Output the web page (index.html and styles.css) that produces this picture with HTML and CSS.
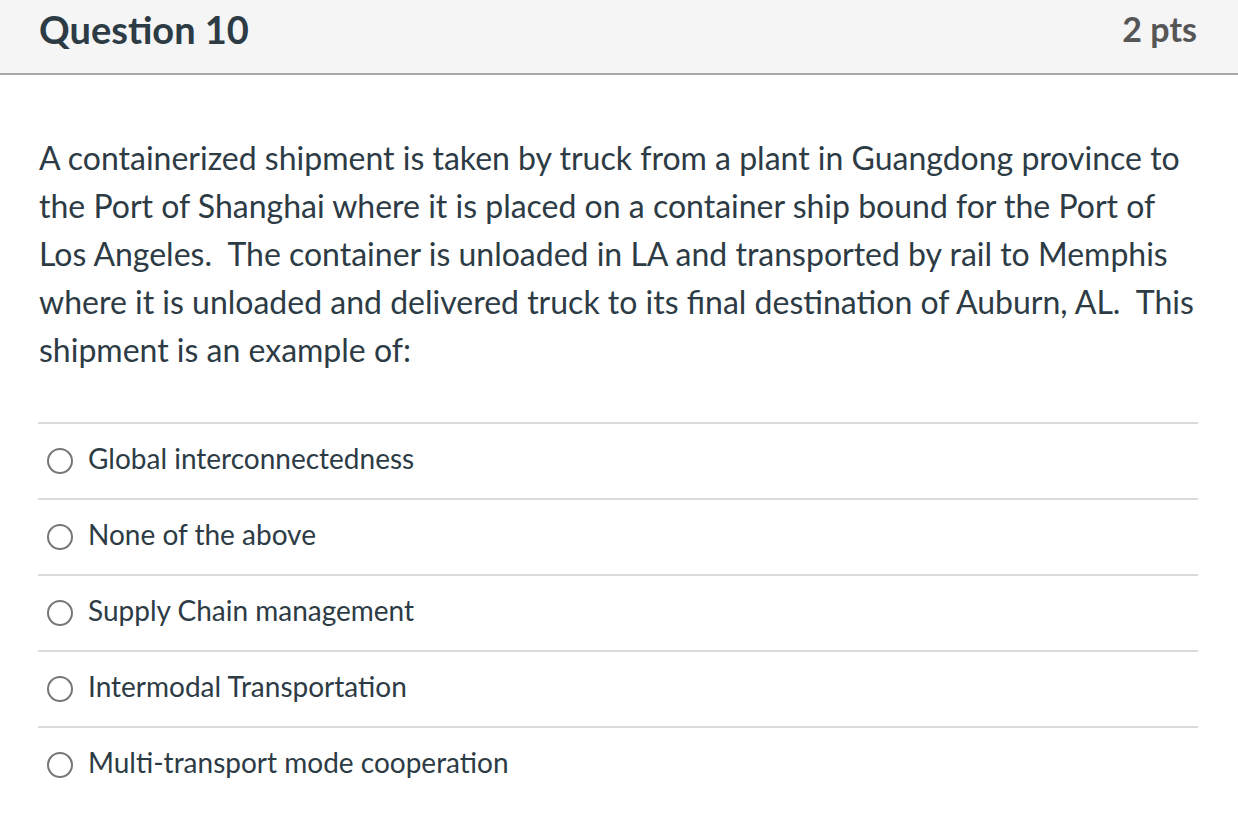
FILE: index.html
```html
<!DOCTYPE html>
<html lang="en">
<head>
    <meta charset="UTF-8">
    <meta name="viewport" content="width=device-width, initial-scale=1.0">
    <title>Question 10</title>
    <link rel="stylesheet" href="styles.css">
</head>
<body>
<div class="question">
    <div class="header">
        <span class="name">Question 10</span>
        <span class="pts">2 pts</span>
    </div>

    <div class="text">
        A containerized shipment is taken by truck from a plant in Guangdong province to
        the Port of Shanghai where it is placed on a container ship bound for the Port of
        Los Angeles.&nbsp; The container is unloaded in LA and transported by rail to Memphis
        where it is unloaded and delivered truck to its final destination of Auburn, AL.&nbsp; This
        shipment is an example of:
    </div>

    <div class="answers">
        <label class="answer">
            <span class="radio"></span>
            <span>Global interconnectedness</span>
        </label>
        <label class="answer">
            <span class="radio"></span>
            <span>None of the above</span>
        </label>
        <label class="answer">
            <span class="radio"></span>
            <span>Supply Chain management</span>
        </label>
        <label class="answer">
            <span class="radio"></span>
            <span>Intermodal Transportation</span>
        </label>
        <label class="answer">
            <span class="radio"></span>
            <span>Multi-transport mode cooperation</span>
        </label>
    </div>
</div>
</body>
</html>
```

FILE: styles.css
```css
body {
    margin: 0;
    background: #fff;
    color: #2d3b45;
    font-family: Lato, "Liberation Sans", sans-serif;
}

.header {
    display: flex;
    justify-content: space-between;
    align-items: center;
    height: 57px;
    padding: 0 41px 16px 39px;
    background: #f5f5f5;
    border-bottom: 2px solid #a8a8a8;
}

.name {
    font-size: 38px;
    font-weight: bold;
    color: #2d3b45;
}

.pts {
    font-size: 34px;
    font-weight: bold;
    color: #565656;
}

.text {
    margin: 59px 39px 0 39px;
    font-size: 32px;
    line-height: 48px;
}

.answers {
    margin: 48px 40px 0 38px;
}

.answer {
    display: flex;
    align-items: center;
    height: 68px;
    padding-bottom: 6px;
    border-top: 2px solid #dadada;
    font-size: 28px;
}

.radio {
    width: 22px;
    height: 22px;
    border: 2px solid #777;
    border-radius: 50%;
    margin: 6px 15px 0 9px;
}
```
